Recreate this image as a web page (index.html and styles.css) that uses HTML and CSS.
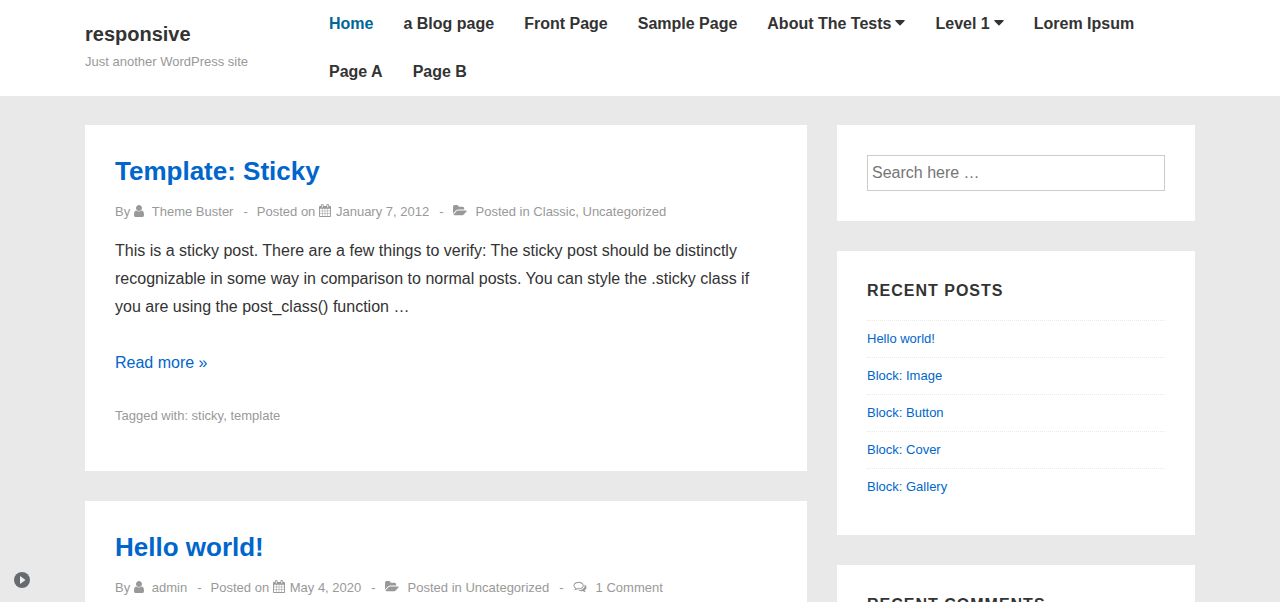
FILE: index.html
```html
<!DOCTYPE html>
<html lang="en">
<head>
<meta charset="utf-8">
<meta name="viewport" content="width=device-width, initial-scale=1">
<title>responsive – Just another WordPress site</title>
<link rel="stylesheet" href="styles.css">
</head>
<body>
<svg class="sprite" aria-hidden="true">
  <symbol id="user" viewBox="256 128 1280 1536"><path d="M1536 1399q0 109-62.5 187t-150.5 78h-854q-88 0-150.5-78t-62.5-187q0-85 8.5-160.5t31.5-152 58.5-131 94-89 134.5-34.5q131 128 313 128t313-128q76 0 134.5 34.5t94 89 58.5 131 31.5 152 8.500 160.5zm-256-887q0 159-112.5 271.5t-271.5 112.5-271.5-112.5-112.5-271.5 112.5-271.5 271.5-112.5 271.5 112.5 112.5 271.5z"/></symbol>
  <symbol id="calendar" viewBox="64 0 1664 1792"><path d="M192 1664h288v-288h-288v288zm352 0h320v-288h-320v288zm-352-352h288v-320h-288v320zm352 0h320v-320h-320v320zm-352-384h288v-288h-288v288zm736 736h320v-288h-320v288zm-384-736h320v-288h-320v288zm768 736h288v-288h-288v288zm-384-352h320v-320h-320v320zm-352-864v-288q0-13-9.5-22.5t-22.5-9.5h-64q-13 0-22.5 9.5t-9.5 22.5v288q0 13 9.5 22.5t22.5 9.5h64q13 0 22.5-9.5t9.5-22.5zm736 864h288v-320h-288v320zm-384-384h320v-288h-320v288zm384 0h288v-288h-288v288zm32-480v-288q0-13-9.5-22.5t-22.5-9.5h-64q-13 0-22.5 9.5t-9.5 22.5v288q0 13 9.5 22.5t22.5 9.5h64q13 0 22.5-9.5t9.5-22.5zm384-64v1280q0 52-38 90t-90 38h-1408q-52 0-90-38t-38-90v-1280q0-52 38-90t90-38h128v-96q0-66 47-113t113-47h64q66 0 113 47t47 113v96h384v-96q0-66 47-113t113-47h64q66 0 113 47t47 113v96h128q52 0 90 38t38 90z"/></symbol>
  <symbol id="folder" viewBox="-64 0 1920 1792"><path d="M1815 952q0 31-31 66l-336 396q-43 51-120.5 86.5t-143.5 35.5h-1088q-34 0-60.5-13t-26.5-43q0-31 31-66l336-396q43-51 120.5-86.5t143.5-35.5h1088q34 0 60.5 13t26.5 43zm-343-344v160h-832q-94 0-197 47.5t-164 119.5l-337 396-5 6q0-4-.5-12.5t-.5-12.5v-960q0-92 66-158t158-66h320q92 0 158 66t66 158v32h544q92 0 158 66t66 158z"/></symbol>
  <symbol id="comments" viewBox="0 0 1792 1792"><path d="M704 384q-153 0-286 52t-211.5 141-78.5 191q0 82 53 158t149 132l97 56-35 84q34-20 62-39l44-31 53 10q78 14 153 14 153 0 286-52t211.5-141 78.5-191-78.5-191-211.5-141-286-52zm0-128q191 0 353.5 68.5t256.5 186.5 94 257-94 257-256.5 186.5-353.5 68.5q-86 0-176-16-124 88-278 128-36 9-86 16h-3q-11 0-20.5-8t-11.5-21q-1-3-1-6.5t.5-6.5 2-6l2.5-5 3.5-5.5 4-5 4.5-5 4-4.5q5-6 23-25t26-29.5 22.5-29 25-38.5 20.5-44q-124-72-195-177t-71-224q0-139 94-257t256.5-186.5 353.5-68.5zm822 1169q10 24 20.5 44t25 38.5 22.5 29 26 29.5 23 25q1 1 4 4.5t4.5 5 4 5 3.5 5.5l2.5 5 2 6 .5 6.5-1 6.5q-3 14-13 22t-22 7q-50-7-86-16-154-40-278-128-90 16-176 16-271 0-472-132 58 4 88 4 161 0 309-45t264-129q125-92 192-212t67-254q0-77-23-152 129 71 204 178t75 230q0 120-71 224.5t-195 176.5z"/></symbol>
  <symbol id="caret" viewBox="0 0 10 6"><path d="M.7 0h8.6q.7.2.3.9L5.5 5.3q-.5.4-1 0L.4.9Q0 .2.7 0z"/></symbol>
</svg>

<header class="site-header">
  <div class="container header-inner">
    <div class="brand">
      <a class="site-title" href="#">responsive</a>
      <p class="tagline">Just another WordPress site</p>
    </div>
    <nav class="menu" aria-label="Main">
      <a class="current" href="#">Home</a>
      <a href="#">a Blog page</a>
      <a href="#">Front Page</a>
      <a href="#">Sample Page</a>
      <a href="#">About The Tests<svg class="caret"><use href="#caret"/></svg></a>
      <a href="#">Level 1<svg class="caret"><use href="#caret"/></svg></a>
      <a href="#">Lorem Ipsum</a>
      <a href="#">Page A</a>
      <a href="#">Page B</a>
    </nav>
  </div>
</header>

<div class="container columns">
  <main class="stack">
    <article class="box">
      <h2 class="post-title"><a href="#">Template: Sticky</a></h2>
      <div class="meta">
        <span>By <svg class="icon icon-user"><use href="#user"/></svg><a href="#">Theme Buster</a></span>
        <span class="sep">-</span>
        <span>Posted on <svg class="icon icon-calendar"><use href="#calendar"/></svg><a href="#">January 7, 2012</a></span>
        <span class="sep">-</span>
        <span><svg class="icon icon-folder"><use href="#folder"/></svg>Posted in <a href="#">Classic</a>, <a href="#">Uncategorized</a></span>
      </div>
      <p class="excerpt">This is a sticky post. There are a few things to verify: The sticky post should be distinctly recognizable in some way in comparison to normal posts. You can style the .sticky class if you are using the post_class() function …</p>
      <a class="read-more" href="#">Read more »</a>
      <p class="tags">Tagged with: <a href="#">sticky</a>, <a href="#">template</a></p>
    </article>

    <article class="box">
      <h2 class="post-title"><a href="#">Hello world!</a></h2>
      <div class="meta">
        <span>By <svg class="icon icon-user"><use href="#user"/></svg><a href="#">admin</a></span>
        <span class="sep">-</span>
        <span>Posted on <svg class="icon icon-calendar"><use href="#calendar"/></svg><a href="#">May 4, 2020</a></span>
        <span class="sep">-</span>
        <span><svg class="icon icon-folder"><use href="#folder"/></svg>Posted in <a href="#">Uncategorized</a></span>
        <span class="sep">-</span>
        <span><svg class="icon icon-comments"><use href="#comments"/></svg><a href="#">1 Comment</a></span>
      </div>
    </article>
  </main>

  <aside class="stack">
    <form class="box">
      <input class="search" type="search" aria-label="Search" placeholder="Search here …">
    </form>
    <section class="box">
      <h3 class="widget-title">Recent Posts</h3>
      <ul class="links">
        <li><a href="#">Hello world!</a></li>
        <li><a href="#">Block: Image</a></li>
        <li><a href="#">Block: Button</a></li>
        <li><a href="#">Block: Cover</a></li>
        <li><a href="#">Block: Gallery</a></li>
      </ul>
    </section>
    <section class="box">
      <h3 class="widget-title">Recent Comments</h3>
    </section>
  </aside>
</div>

<button class="play" type="button" aria-label="Play">
  <svg viewBox="0 0 18 18"><circle cx="9" cy="9" r="8.5" fill="#f1f1f1"/><circle cx="9" cy="9" r="8" fill="#656b6f"/><path d="M7 5l5.500 4L7 13z" fill="#f1f1f1"/></svg>
</button>
</body>
</html>
```

FILE: styles.css
```css
* {
  box-sizing: border-box;
}

body {
  margin: 0;
  background: #e9e9e9;
  color: #333;
  font: 16px/28px "Liberation Sans", Arial, sans-serif;
}

a {
  color: #0066cc;
  text-decoration: none;
}

h2, h3, p, ul {
  margin: 0;
  padding: 0;
}

.sprite {
  display: none;
}

.container {
  max-width: 1140px;
  margin: 0 auto;
  padding: 0 15px;
}

.site-header {
  background: #fff;
}

.header-inner {
  display: flex;
}

.brand {
  flex: 0 0 229px;
  padding-top: 20px;
}

.site-title {
  display: block;
  color: #333;
  font-size: 20px;
  font-weight: 700;
}

.tagline {
  color: #999;
  font-size: 13px;
  line-height: 28px;
}

.menu {
  display: flex;
  flex-wrap: wrap;
}

.menu a {
  padding: 0 15px;
  color: #333;
  font-weight: 700;
  line-height: 48px;
}

.menu .current {
  color: #006799;
}

.caret {
  width: 10px;
  height: 6px;
  margin-left: 4px;
  vertical-align: 3px;
  fill: currentColor;
}

.columns {
  display: grid;
  grid-template-columns: minmax(0, 722fr) minmax(0, 358fr);
  gap: 30px;
  align-items: start;
  padding-top: 29px;
}

.stack {
  display: grid;
  gap: 30px;
}

.box {
  padding: 30px;
  background: #fff;
}

.post-title {
  font-size: 26px;
  line-height: 32px;
}

.meta {
  display: flex;
  flex-wrap: wrap;
  margin-top: 11px;
  color: #999;
  font-size: 13px;
}

.meta a,
.tags a {
  color: #999;
}

.sep {
  margin: 0 9px 0 10px;
}

.icon {
  height: 13px;
  vertical-align: -1px;
  fill: currentColor;
}

.icon-user {
  width: 10px;
  height: 12px;
  margin-right: 8px;
}

.icon-calendar {
  width: 12px;
  margin-right: 5px;
}

.icon-folder,
.icon-comments {
  width: 14px;
  margin-right: 9px;
}

.excerpt {
  margin: 11px 0 28px;
}

.tags {
  margin: 25px 0 11px;
  color: #999;
  font-size: 13px;
}

.search {
  display: block;
  width: 100%;
  height: 36px;
  padding: 0 4px;
  border: 1px solid #ccc;
  border-radius: 0;
  background: #fff;
  color: #333;
  font: inherit;
  appearance: none;
}

.search::placeholder {
  color: #757575;
}

.widget-title {
  font-size: 16px;
  line-height: 20px;
  letter-spacing: 1px;
  text-transform: uppercase;
}

.links {
  margin-top: 19px;
  list-style: none;
  font-size: 13px;
  line-height: 36px;
}

.links li {
  border-top: 1px dotted #e9e9e9;
}

.play {
  position: fixed;
  left: 13px;
  bottom: 13px;
  width: 18px;
  height: 18px;
  padding: 0;
  border: 0;
  background: none;
}

.play svg {
  display: block;
}
```
